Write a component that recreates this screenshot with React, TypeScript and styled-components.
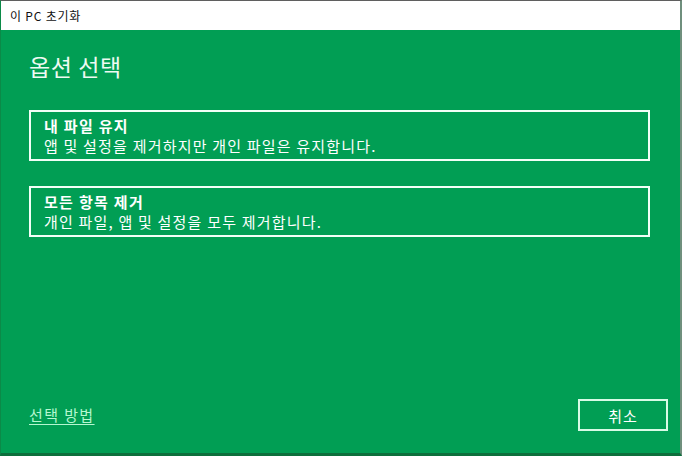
import React from "react";
import { styled, createGlobalStyle } from "styled-components";

const GlobalStyle = createGlobalStyle`
  html, body {
    margin: 0;
    padding: 0;
    background: #ffffff;
  }
  body {
    font-family: "Noto Sans CJK KR", "Noto Sans", sans-serif;
  }
`;

const Window = styled.div`
  width: 682px;
  height: 456px;
  box-sizing: border-box;
  display: flex;
  flex-direction: column;
  border-top: 1px solid #5f5f5f;
  border-left: 1px solid #0b8a48;
  border-right: 2px solid #6f8f7d;
  border-bottom: 3px solid #0d6f3c;
  background: #019e54;
  overflow: hidden;
`;

const TitleBar = styled.div`
  height: 29px;
  flex: none;
  display: flex;
  align-items: center;
  padding-left: 9px;
  background: #ffffff;
  color: #111111;
  font-size: 12px;
  letter-spacing: 0.8px;
`;

const Body = styled.div`
  flex: 1;
  display: flex;
  flex-direction: column;
  padding: 20px 12px 0 28px;
  color: #ffffff;
`;

const Heading = styled.h1`
  margin: 0 0 28px;
  font-size: 23px;
  line-height: 32px;
  font-weight: 400;
  letter-spacing: 0.6px;
  color: #eefaf2;
`;

const OptionList = styled.div`
  display: flex;
  flex-direction: column;
  gap: 25px;
`;

const OptionCard = styled.button`
  display: flex;
  flex-direction: column;
  align-items: flex-start;
  box-sizing: border-box;
  width: 621px;
  padding: 4px 13px 3px;
  border: 2px solid #f2fff7;
  background: transparent;
  color: #ffffff;
  font-family: inherit;
  text-align: left;
  cursor: pointer;
`;

const OptionTitle = styled.span`
  font-size: 15px;
  line-height: 20px;
  font-weight: 700;
  letter-spacing: 1.3px;
`;

const OptionDesc = styled.span`
  font-size: 15px;
  line-height: 20px;
  font-weight: 400;
  letter-spacing: 1.2px;
`;

const Footer = styled.div`
  margin-top: auto;
  display: flex;
  align-items: center;
  justify-content: space-between;
  padding-bottom: 22px;
`;

const HelpLink = styled.a`
  font-size: 15px;
  line-height: 20px;
  letter-spacing: 1.4px;
  color: #b5f7d0;
  text-decoration: underline;
  text-underline-offset: 3px;
  cursor: pointer;
`;

const CancelButton = styled.button`
  width: 90px;
  height: 32px;
  box-sizing: border-box;
  border: 2px solid #d8fbe6;
  background: transparent;
  color: #ffffff;
  font-family: inherit;
  font-size: 15px;
  letter-spacing: 1px;
  cursor: pointer;
`;

type Option = { title: string; desc: string };

const options: Option[] = [
  { title: "내 파일 유지", desc: "앱 및 설정을 제거하지만 개인 파일은 유지합니다." },
  { title: "모든 항목 제거", desc: "개인 파일, 앱 및 설정을 모두 제거합니다." },
];

export default function App() {
  return (
    <>
      <GlobalStyle />
      <Window>
        <TitleBar>이 PC 초기화</TitleBar>
        <Body>
          <Heading>옵션 선택</Heading>
          <OptionList>
            {options.map((o) => (
              <OptionCard key={o.title}>
                <OptionTitle>{o.title}</OptionTitle>
                <OptionDesc>{o.desc}</OptionDesc>
              </OptionCard>
            ))}
          </OptionList>
          <Footer>
            <HelpLink>선택 방법</HelpLink>
            <CancelButton>취소</CancelButton>
          </Footer>
        </Body>
      </Window>
    </>
  );
}
